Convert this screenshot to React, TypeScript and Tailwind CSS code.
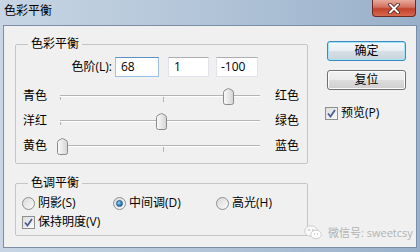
import clsx from "clsx";

const sliders = [
  { left: "青色", right: "红色", value: 68 },
  { left: "洋红", right: "绿色", value: 1 },
  { left: "黄色", right: "蓝色", value: -100 },
];

function Thumb({ value }: { value: number }) {
  const center = 2 + (value + 100) * 0.99;
  return (
    <svg
      width="11"
      height="17"
      viewBox="0 0 11 17"
      className="absolute top-[2px]"
      style={{ left: center - 5.5 }}
    >
      <defs>
        <linearGradient id="thumbFill" x1="0" y1="0" x2="1" y2="0">
          <stop offset="0" stopColor="#fbfbfb" />
          <stop offset="1" stopColor="#d4d4d4" />
        </linearGradient>
      </defs>
      <path
        d="M0.5 4.5 Q0.5 3 2 2.2 L4.6 0.8 Q5.5 0.4 6.4 0.8 L9 2.2 Q10.5 3 10.5 4.5 V14.5 Q10.5 16.5 8.5 16.5 H2.5 Q0.5 16.5 0.5 14.5 Z"
        fill="url(#thumbFill)"
        stroke="#8a8a8a"
      />
    </svg>
  );
}

function SliderRow({ left, right, value }: { left: string; right: string; value: number }) {
  return (
    <div className="flex h-[20px] items-center">
      <span className="w-[37px] leading-[16px]">{left}</span>
      <div className="relative flex h-[20px] w-[200px] items-center">
        <div className="h-[2px] w-full border-t border-[#b4b4b4] bg-white" />
        <div className="absolute left-0 top-[11px] h-[3px] w-px bg-[#b4b4b4]" />
        <div className="absolute left-[103px] top-[11px] h-[5px] w-px bg-[#b4b4b4]" />
        <Thumb value={value} />
      </div>
      <span className="ml-[15px] leading-[16px]">{right}</span>
    </div>
  );
}

function CheckBox() {
  return (
    <div className="flex h-[13px] w-[13px] items-center justify-center border border-[#8e8f8f] bg-[linear-gradient(135deg,#dcdcdc,#fbfbfb)]">
      <svg width="9" height="9" viewBox="0 0 9 9">
        <path d="M1 4.5 L3.5 7.5 L8 1" fill="none" stroke="#4a5f97" strokeWidth="1.8" />
      </svg>
    </div>
  );
}

function Radio({ checked }: { checked?: boolean }) {
  return (
    <div className="flex h-[13px] w-[13px] items-center justify-center rounded-full border border-[#8e8f8f] bg-[linear-gradient(135deg,#d9d9d9,#fafafa)]">
      {checked && (
        <div className="h-[7px] w-[7px] rounded-full border border-[#1b5b8e] bg-[radial-gradient(circle_at_35%_35%,#9fd3f5,#1d6fb3_70%)]" />
      )}
    </div>
  );
}

function Button({ label, primary }: { label: string; primary?: boolean }) {
  return (
    <div
      className={clsx(
        "flex h-[20px] w-[79px] items-center justify-center rounded-[3px] border leading-[16px]",
        primary
          ? "border-[#3a8cbf] bg-[linear-gradient(#f4f9fc,#e8eef2_50%,#d7e0e6_50%,#cad4da)] shadow-[inset_0_0_0_1px_#a6e2f8]"
          : "border-[#707070] bg-[linear-gradient(#f2f2f2,#ebebeb_50%,#dddddd_50%,#cfcfcf)] shadow-[inset_0_0_0_1px_#fcfcfc]"
      )}
    >
      {label}
    </div>
  );
}

function GroupBox({ title, className, children }: { title: string; className: string; children: React.ReactNode }) {
  return (
    <div className={clsx("relative w-[293px] rounded-[2px] border border-[#c5c5c5]", className)}>
      <span className="absolute -top-[9px] left-[12px] bg-[#f0f0f0] px-[3px] leading-[16px]">{title}</span>
      {children}
    </div>
  );
}

export default function App() {
  return (
    <div className="flex h-[252px] w-[420px] flex-col bg-[linear-gradient(90deg,#c7d5e4,#b4c6d9_45%,#98b0ca)] font-['Open_Sans','Noto_Sans_CJK_SC',sans-serif] text-[12px] text-black">
      <div className="flex h-[25px] shrink-0 items-start justify-between">
        <span className="pl-[4px] pt-[3px] text-[12px] leading-[16px]">色彩平衡</span>
        <div className="mr-[4px] flex h-[17px] w-[44px] items-center justify-center rounded-b-[4px] border border-t-0 border-[#6b2b22] bg-[linear-gradient(#e9a99b,#d2705f_45%,#c3412b_55%,#d66a4f)]">
          <svg width="14" height="11" viewBox="0 0 14 11">
            <path d="M3 1.5 L11 9.5 M11 1.5 L3 9.5" stroke="#4d1a14" strokeWidth="3.6" strokeLinecap="round" />
            <path d="M3 1.5 L11 9.5 M11 1.5 L3 9.5" stroke="#ffffff" strokeWidth="2" strokeLinecap="round" />
          </svg>
        </div>
      </div>
      <div className="flex-1 px-[3px] pb-[4px]">
        <div className="relative flex h-full border border-[#7b8ea5] bg-[#f0f0f0] pl-[11px]">
          <div className="flex flex-col pt-[18px]">
            <GroupBox title="色彩平衡" className="h-[120px] pl-[7px] pt-[12px]">
              <div className="flex h-[20px] items-center">
                <span className="w-[92px] pr-[3px] text-right leading-[16px]">色阶(L):</span>
                <div className="flex h-[20px] w-[44px] items-center border border-[#9ec2e0] border-t-[#5b8fbd] bg-white pl-[5px]">68</div>
                <div className="ml-[9px] flex h-[20px] w-[41px] items-center border border-[#e2e3ea] border-t-[#abadb3] bg-white pl-[5px]">1</div>
                <div className="ml-[7px] flex h-[20px] w-[42px] items-center border border-[#e2e3ea] border-t-[#abadb3] bg-white pl-[4px]">-100</div>
              </div>
              <div className="mt-[9px] flex flex-col gap-[5px]">
                {sliders.map(s => (
                  <SliderRow key={s.left} {...s} />
                ))}
              </div>
            </GroupBox>
            <GroupBox title="色调平衡" className="mt-[19px] h-[53px] pl-[6px] pt-[11px]">
              <div className="flex h-[16px] items-center">
                <div className="flex w-[91px] items-center gap-[3px]">
                  <Radio />
                  <span className="leading-[16px]">阴影(S)</span>
                </div>
                <div className="flex w-[103px] items-center gap-[3px]">
                  <Radio checked />
                  <span className="leading-[16px]">中间调(D)</span>
                </div>
                <div className="flex items-center gap-[3px]">
                  <Radio />
                  <span className="leading-[16px]">高光(H)</span>
                </div>
              </div>
              <div className="mt-[3px] flex h-[16px] items-center gap-[3px]">
                <CheckBox />
                <span className="leading-[16px]">保持明度(V)</span>
              </div>
            </GroupBox>
          </div>
          <div className="ml-[17px] flex flex-col pt-[15px]">
            <div className="ml-[2px] flex flex-col gap-[9px]">
              <Button label="确定" primary />
              <Button label="复位" />
            </div>
            <div className="mt-[15px] flex items-center gap-[3px]">
              <CheckBox />
              <span className="leading-[16px]">预览(P)</span>
            </div>
          </div>
          <div className="absolute left-[300px] top-[199px] flex items-center gap-[6px] text-[11px] text-[#b3b3b3]">
            <svg width="18" height="15" viewBox="0 0 18 15">
              <ellipse cx="7" cy="6" rx="6.3" ry="5.2" fill="#fafafa" stroke="#cfcfcf" />
              <ellipse cx="12" cy="9.5" rx="5.2" ry="4.3" fill="#ffffff" stroke="#cfcfcf" />
              <circle cx="5" cy="5" r="0.9" fill="#c2c2c2" />
              <circle cx="9" cy="5" r="0.9" fill="#c2c2c2" />
              <circle cx="10.5" cy="9" r="0.7" fill="#c2c2c2" />
              <circle cx="13.5" cy="9" r="0.7" fill="#c2c2c2" />
            </svg>
            <span className="leading-[14px]">微信号: sweetcsy</span>
          </div>
        </div>
      </div>
    </div>
  );
}
